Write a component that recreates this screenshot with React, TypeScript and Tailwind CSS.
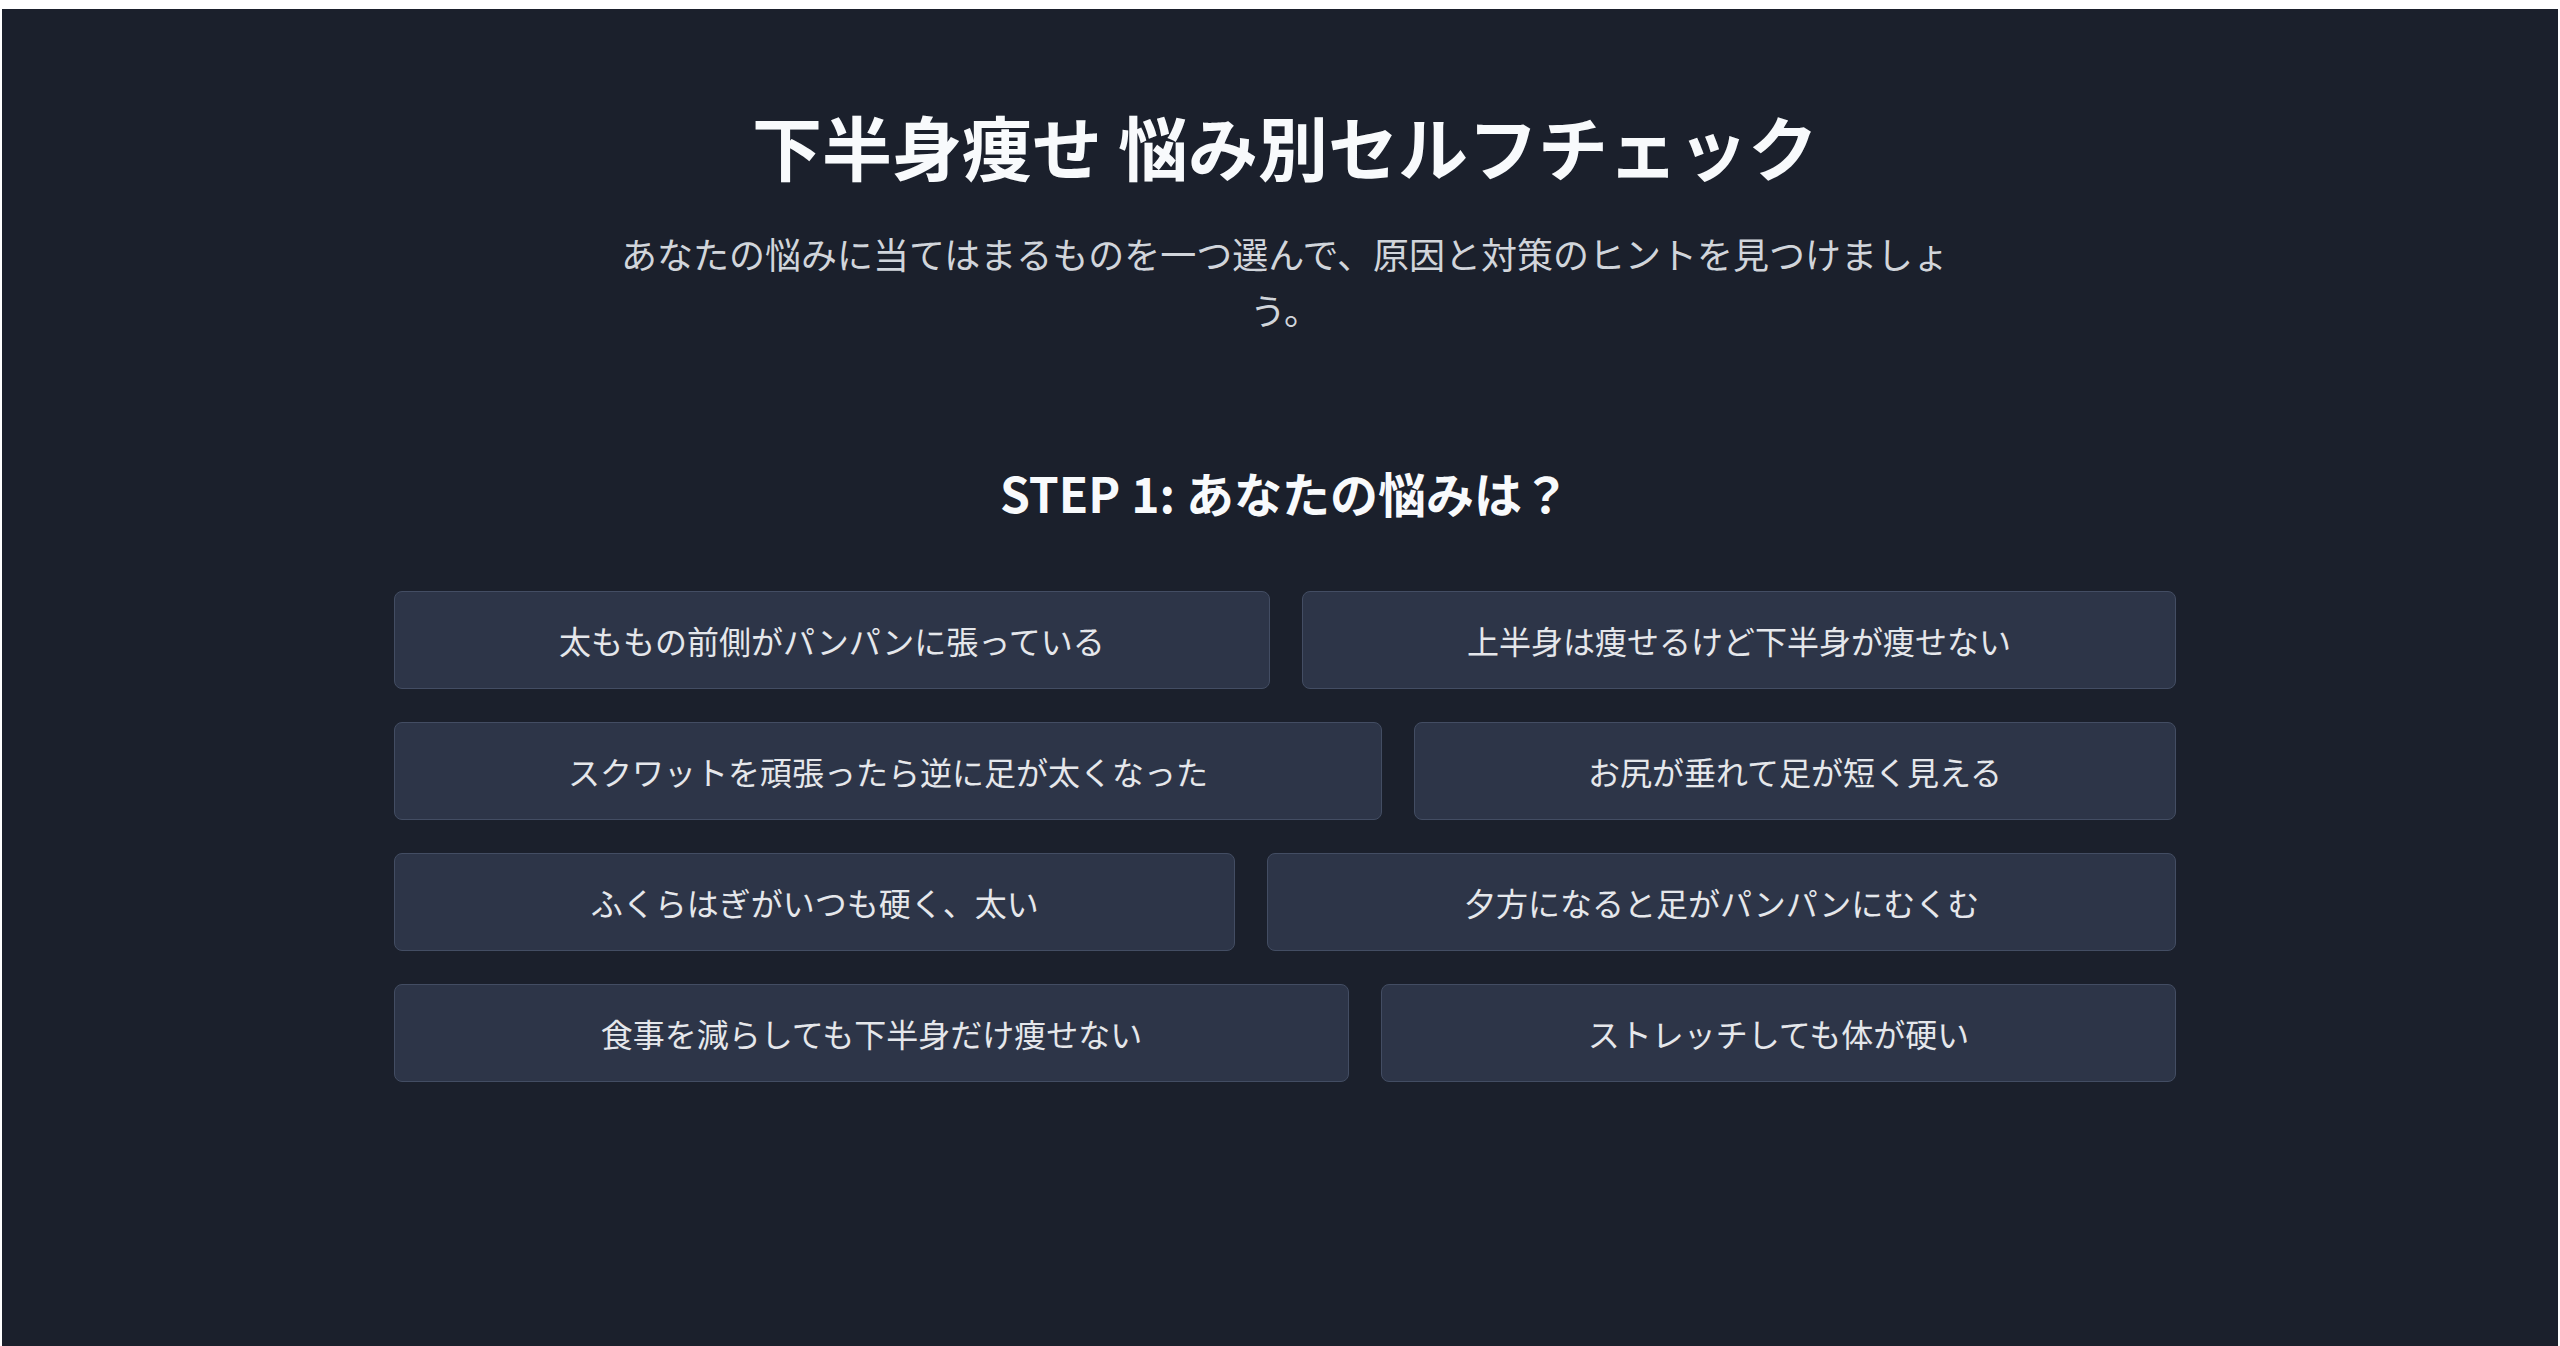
const concerns = [
  "太ももの前側がパンパンに張っている",
  "上半身は痩せるけど下半身が痩せない",
  "スクワットを頑張ったら逆に足が太くなった",
  "お尻が垂れて足が短く見える",
  "ふくらはぎがいつも硬く、太い",
  "夕方になると足がパンパンにむくむ",
  "食事を減らしても下半身だけ痩せない",
  "ストレッチしても体が硬い",
];

export default function App() {
  return (
    <div className="min-h-screen bg-white pt-[9px] px-[2px] font-['Noto_Sans_CJK_JP',sans-serif]">
      <div className="h-[1337px] bg-[#1b202c] pl-[10px]">
        <div className="mx-auto w-[1782px] pt-[93px]">
          <h1 className="text-center text-[70px] leading-[88px] font-bold text-[#f8fafc]">
            下半身痩せ 悩み別セルフチェック
          </h1>
          <p className="mx-auto mt-[35px] max-w-[1360px] text-center text-[36px] leading-[56px] text-[#d1d5db]">
            あなたの悩みに当てはまるものを一つ選んで、原因と対策のヒントを見つけましょう。
          </p>

          <h2 className="mt-[125px] text-center text-[48px] leading-[60px] font-bold text-[#f8fafc]">
            STEP 1: あなたの悩みは？
          </h2>

          <div className="mt-[69px] flex flex-wrap gap-x-[32px] gap-y-[33px]">
            {concerns.map((c) => (
              <button
                key={c}
                className="grow rounded-[8px] border border-[#434d63] bg-[#2d3548] px-12 py-6 text-center text-[32px] leading-[48px] text-[#e5e7eb]"
              >
                {c}
              </button>
            ))}
          </div>
        </div>
      </div>
    </div>
  );
}
